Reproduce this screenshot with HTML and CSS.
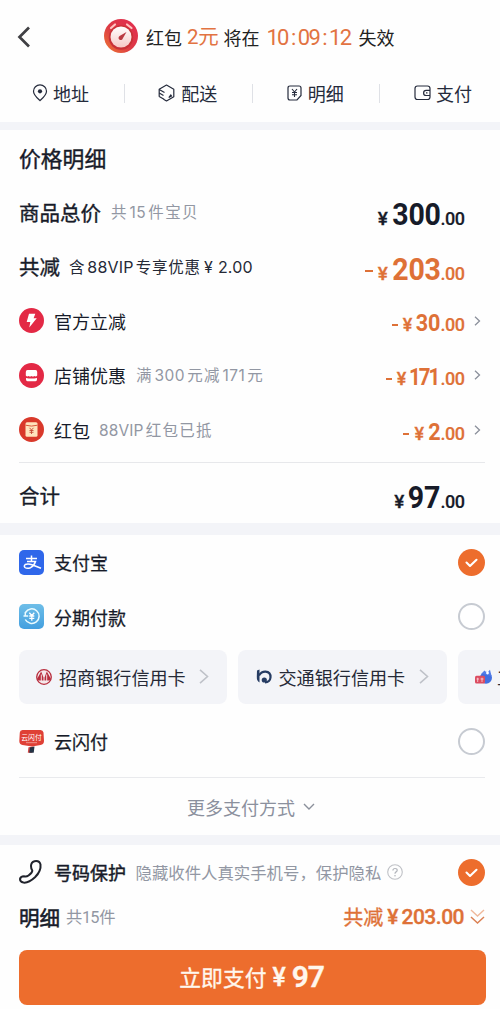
FILE: index.html
```html
<!DOCTYPE html>
<html lang="zh-CN">
<head>
<meta charset="utf-8">
<title>支付</title>
<link rel="stylesheet" href="styles.css">
</head>
<body>
<header class="top">
  <svg class="back" width="14" height="22" viewBox="0 0 14 22"><path d="M12 1.500L2.500 11L12 20.500" fill="none" stroke="#404044" stroke-width="2.700"/></svg>
  <svg class="clock" width="34" height="34" viewBox="0 0 34 34">
    <defs>
      <linearGradient id="ring" x1="1" y1="0" x2="0" y2="1"><stop offset="0" stop-color="#e32c50"/><stop offset=".55" stop-color="#dc3a45"/><stop offset="1" stop-color="#ef7b32"/></linearGradient>
      <linearGradient id="face" x1="0" y1="0" x2="0" y2="1"><stop offset="0" stop-color="#fff"/><stop offset="1" stop-color="#f6c9c6"/></linearGradient>
    </defs>
    <circle cx="17" cy="17" r="17" fill="url(#ring)"/>
    <circle cx="17" cy="18.500" r="12.200" fill="#c93137"/>
    <path d="M7 9L11 5.500M23 5.500L27.500 9" stroke="#ffc3c0" stroke-width="2.200" stroke-linecap="round"/>
    <circle cx="17" cy="18" r="10.500" fill="url(#face)"/>
    <path d="M22.500 13L18.900 19.300A2.200 2.200 0 1 1 16 16.800Z" fill="#b93a42"/>
  </svg>
  <p class="notice"><span>红包</span><b class="two">2元</b><span>将在</span><b class="timer"><i>10</i><i>:</i><i>09</i><i>:</i><i>12</i></b><span>失效</span></p>
</header>
<nav class="tabs">
  <a class="tab"><svg width="16" height="18" viewBox="0 0 16 18"><path d="M8 16.600C5.500 14.300 1.500 11 1.500 7.200A6.500 6.300 0 0 1 14.500 7.200C14.500 11 10.500 14.300 8 16.600Z" fill="none" stroke="#252b3c" stroke-width="1.200"/><circle cx="8" cy="7.300" r="2.100" fill="#252b3c"/></svg>地址</a>
  <a class="tab"><svg width="17" height="18" viewBox="0 0 17 18"><path d="M1.200 12.800V5.200L8.500 1L15.800 5.200V12.800L8.500 17L5.500 15.300" fill="none" stroke="#252b3c" stroke-width="1.200" stroke-linejoin="round"/><path d="M1.200 5.500L6.500 8.500M1.200 9L5.500 11.400M1.200 12.500L6 15.200M10.800 13.500L13.500 12L12.800 11Z" fill="none" stroke="#252b3c" stroke-width="1.200"/></svg>配送</a>
  <a class="tab"><svg width="15" height="16" viewBox="0 0 15 16"><path d="M3 1H12Q14 1 14 3V10.500L10 15H3Q1 15 1 13V3Q1 1 3 1Z" fill="none" stroke="#252b3c" stroke-width="1.200"/><path d="M5 4L7.500 7L10 4M7.500 7V12M5 7.500H10M5 9.700H10" fill="none" stroke="#252b3c" stroke-width="1.100"/></svg>明细</a>
  <a class="tab"><svg width="17" height="16" viewBox="0 0 17 16"><path d="M16 5.300V3.500Q16 1 13.500 1H3.500Q1 1 1 3.500V12Q1 14.500 3.500 14.500H13.500Q16 14.500 16 12V10.500M16 5.300H12.200A2.600 2.600 0 0 0 12.200 10.500H16ZM12 7.900H13.500" fill="none" stroke="#252b3c" stroke-width="1.200"/></svg>支付</a>
</nav>

<section class="band prices">
  <h2 class="title">价格明细</h2>
  <div class="row"><strong class="lead">商品总价</strong><span class="hint">共<em>15</em>件宝贝</span><span class="sum big"><i class="yen">¥</i><b>300</b><small>.00</small></span></div>
  <div class="row"><strong class="lead">共减</strong><span class="vip">含<em>88VIP</em>专享优惠<em class="vyen">¥</em><em class="vnum">2.00</em></span><span class="sum big orange"><i class="dash"></i><i class="yen">¥</i><b>203</b><small>.00</small></span></div>
  <div class="row item">
    <svg class="badge" width="25" height="25" viewBox="0 0 25 25"><circle cx="12.500" cy="12.500" r="12.500" fill="#e32945"/><path d="M10 5.800H16.300L14.600 10.200H17.700L10.300 19.500L11.300 14H7.700Z" fill="#fff"/></svg>
    <span class="name">官方立减</span><span class="sum orange"><i class="dash"></i><i class="yen">¥</i><b>30</b><small>.00</small></span><svg class="chev" width="7" height="10" viewBox="0 0 7 10"><path d="M1 .8L5.500 5L1 9.200" fill="none" stroke="#8b909b" stroke-width="1.300"/></svg></div>
  <div class="row item">
    <svg class="badge" width="25" height="25" viewBox="0 0 25 25"><circle cx="12.500" cy="12.500" r="12.500" fill="#e32945"/><path d="M8.500 7H16.500Q18.200 7 18.200 9V12.500Q17 14 15.300 13Q14 14 12.500 13Q11 14 9.700 13Q8 14 6.800 12.500V9Q6.800 7 8.500 7Z" fill="#fff"/><path d="M7 15Q12.500 16 18 15V16.500Q18 18.200 16.500 18.200H8.500Q7 18.200 7 16.500Z" fill="#fff"/></svg>
    <span class="name">店铺优惠</span><span class="hint">满<em>300</em>元减<em>171</em>元</span><span class="sum orange"><i class="dash"></i><i class="yen">¥</i><b class="tight">171</b><small>.00</small></span><svg class="chev" width="7" height="10" viewBox="0 0 7 10"><path d="M1 .8L5.500 5L1 9.200" fill="none" stroke="#8b909b" stroke-width="1.300"/></svg></div>
  <div class="row item">
    <svg class="badge" width="25" height="25" viewBox="0 0 25 25"><circle cx="12.500" cy="12.500" r="12.500" fill="#d9392b"/><rect x="6.500" y="5.200" width="12" height="14.600" rx="1.500" fill="#ffe3bd"/><path d="M6.500 8.200Q12.500 10 18.500 8.200" fill="none" stroke="#d9593c" stroke-width="1"/><path d="M10.500 10.800L12.500 13L14.500 10.800M12.500 13V17M10.500 13.500H14.500M10.500 15.300H14.500" fill="none" stroke="#c54a36" stroke-width=".9"/></svg>
    <span class="name">红包</span><span class="hint"><em class="first">88VIP</em>红包已抵</span><span class="sum orange"><i class="dash"></i><i class="yen">¥</i><b class="one">2</b><small>.00</small></span><svg class="chev" width="7" height="10" viewBox="0 0 7 10"><path d="M1 .8L5.500 5L1 9.200" fill="none" stroke="#8b909b" stroke-width="1.300"/></svg></div>
  <div class="row total"><strong class="lead">合计</strong><span class="sum big"><i class="yen">¥</i><b class="pair">97</b><small>.00</small></span></div>
</section>

<section class="band pay">
  <div class="row item">
    <svg class="badge" width="25" height="25" viewBox="0 0 25 25"><rect width="25" height="25" rx="5" fill="#2f67ea"/><path d="M7 8.500H18M12.500 5.500V11.500M8 11.500H16.500Q15 16 11.500 17.700Q8 19 6 17.500Q4.500 16 6.300 14.500Q9 13.200 13 14.800L22 18.300" fill="none" stroke="#fff" stroke-width="1.500"/></svg>
    <span class="name mid">支付宝</span><svg class="radio" width="27" height="27" viewBox="0 0 27 27"><circle cx="13.500" cy="13.500" r="13.500" fill="#ed6d2d"/><path d="M8.500 13.600L12 17L18.500 10.800" fill="none" stroke="#fff" stroke-width="2.100" stroke-linecap="round" stroke-linejoin="round"/></svg></div>
  <div class="row item">
    <svg class="badge" width="25" height="25" viewBox="0 0 25 25"><defs><linearGradient id="sky" x1="0" y1="0" x2="0" y2="1"><stop offset="0" stop-color="#6ebee8"/><stop offset="1" stop-color="#439fdf"/></linearGradient></defs><rect width="25" height="25" rx="5" fill="url(#sky)"/><path d="M6.300 15.500A7.300 7.300 0 1 0 6.500 8.500M4.500 12H9.200M6.300 8V12" fill="none" stroke="#e9fbff" stroke-width="1.500"/><path d="M10.300 8.800L12.800 11.500L15.300 8.800M12.800 11.500V16.800M10.300 12H15.300M10.300 14.300H15.300" fill="none" stroke="#fff" stroke-width="1.300"/></svg>
    <span class="name mid">分期付款</span><svg class="radio" width="27" height="27" viewBox="0 0 27 27"><circle cx="13.500" cy="13.500" r="12.500" fill="#fff" stroke="#c7cbd2" stroke-width="2"/></svg></div>
  <div class="cards">
    <div class="card"><svg width="16" height="16" viewBox="0 0 16 16"><circle cx="8" cy="8" r="7.300" fill="#f5e8ea" stroke="#b82e3e" stroke-width="1.300"/><path d="M1 10L5.200 2.500L7.500 8.500V11.500H1.800ZM8.500 8.500L10.800 2.500L15 10L14.200 11.500H8.500Z" fill="#b82e3e"/><path d="M5.300 5.500V12M10.700 5.500V12" stroke="#f8eef0" stroke-width=".9"/></svg><span>招商银行信用卡</span><svg class="go" width="10" height="15" viewBox="0 0 10 15"><path d="M1 .8L8.500 7.500L1 14.200" fill="none" stroke="#bfc2c9" stroke-width="1.600"/></svg></div>
    <div class="card"><svg width="16" height="15" viewBox="0 0 16 15"><path d="M1 1.500L3.500 .5V13.500Q.6 12 .8 7.500Z" fill="#263c63"/><path d="M3 6.500Q5.500 2.500 9.500 2.700Q14.800 3 14.500 8.500Q14 13.300 9 13.300" fill="none" stroke="#263c63" stroke-width="2.200"/><circle cx="8.300" cy="11" r="2.600" fill="#263c63"/></svg><span>交通银行信用卡</span><svg class="go" width="10" height="15" viewBox="0 0 10 15"><path d="M1 .8L8.500 7.500L1 14.200" fill="none" stroke="#bfc2c9" stroke-width="1.600"/></svg></div>
    <div class="card last"><svg width="17" height="16" viewBox="0 0 17 16"><circle cx="11" cy="8.800" r="6" fill="#426fe0"/><path d="M6.500 4.500L9.500 1.500L12 4L15 .8L16.500 7Z" fill="#527de8"/><circle cx="12.500" cy="4" r="1.400" fill="#fff"/><rect x="0" y="6.800" width="10" height="7.800" rx="1.500" fill="#db4c61"/><path d="M1.500 10H4M2.700 8.700V13M5.500 10H8.500M7 8.700V13" stroke="#fbd7dc" stroke-width=".8"/></svg><span>工</span></div>
  </div>
  <div class="row item union">
    <svg class="badge" width="25" height="25" viewBox="0 0 25 25"><path d="M3.500 1H21.500Q24 1 24.500 3.500L25 12Q25 15.500 21.500 16L13 17.500L3.500 16Q.3 15.500 .3 12L.8 3.500Q1 1 3.500 1Z" fill="#df4036"/><path d="M9.500 18.200L14.500 17.500L13 23.800H8.800Z" fill="#d04443"/><path d="M11 18.500L15.500 17.500L14.700 23.800H10.200Z" fill="#243344"/><text x="12.500" y="11.300" text-anchor="middle" class="mini">云闪付</text><path d="M7 13.700H18" stroke="#f3a9a3" stroke-width=".8"/></svg>
    <span class="name mid">云闪付</span><svg class="radio" width="27" height="27" viewBox="0 0 27 27"><circle cx="13.500" cy="13.500" r="12.500" fill="#fff" stroke="#c7cbd2" stroke-width="2"/></svg></div>
  <div class="more">更多支付方式<svg width="12" height="8" viewBox="0 0 12 8"><path d="M1 1L6 6L11 1" fill="none" stroke="#8b909b" stroke-width="1.400"/></svg></div>
</section>

<footer class="band foot">
  <div class="row item protect">
    <svg class="badge" width="25" height="25" viewBox="0 0 25 25"><path d="M15.500 1.200Q20.500 .2 21.500 4.500Q22.300 11 16 17.300Q9.500 23.300 4.500 22.600Q1 22 1 19Q1.500 16.300 5 16.300Q7.500 17 9.500 15.500Q13.500 12.500 13.300 10.500Q12 8.800 12 6Q12.100 2.200 15.500 1.200Z" fill="none" stroke="#20232c" stroke-width="2" stroke-linejoin="round"/></svg>
    <strong class="name bold">号码保护</strong><span class="privacy">隐藏收件人真实手机号，保护隐私</span><svg class="help" width="16" height="16" viewBox="0 0 16 16"><circle cx="8" cy="8" r="7.300" fill="none" stroke="#bfc1c6" stroke-width="1.100"/><path d="M5.900 6.500Q6 4.500 8 4.500Q10.200 4.500 10.200 6.300Q10.200 7.300 9.100 7.900Q8 8.500 8 9.800" fill="none" stroke="#b2b5bb" stroke-width="1.200"/><circle cx="8" cy="11.800" r=".8" fill="#b2b5bb"/></svg><svg class="radio" width="27" height="27" viewBox="0 0 27 27"><circle cx="13.500" cy="13.500" r="13.500" fill="#ed6d2d"/><path d="M8.500 13.600L12 17L18.500 10.800" fill="none" stroke="#fff" stroke-width="2.100" stroke-linecap="round" stroke-linejoin="round"/></svg></div>
  <div class="row detail"><strong class="lead heavy">明细</strong><span class="count">共<em>15</em>件</span><span class="saved">共减<i>¥</i><b>203.00</b></span><svg class="down" width="15" height="16" viewBox="0 0 15 16"><path d="M1 1L7.500 7L14 1" fill="none" stroke="#efb99c" stroke-width="1.400"/><path d="M1 8L7.500 14L14 8" fill="none" stroke="#db8154" stroke-width="1.500"/></svg></div>
  <button class="submit">立即支付<i>¥</i><b>97</b></button>
</footer>
</body>
</html>
```

FILE: styles.css
```css
* { box-sizing: border-box; }
body {
  margin: 0;
  width: 500px;
  height: 1009px;
  overflow: hidden;
  background: #fefefe;
  color: #171b29;
  font-family: "Noto Sans CJK SC", sans-serif;
  font-size: 18px;
  line-height: 1;
  white-space: nowrap;
}
h2, p { margin: 0; }
i, em { font-style: normal; }
svg { display: block; flex: none; overflow: visible; }

.top { height: 74px; display: flex; align-items: center; padding-left: 17px; }
.clock { margin-left: 73px; margin-top: -2px; }
.notice { display: flex; align-items: center; margin-left: 8px; height: 30px; color: #222; }
.notice b { font-weight: 400; color: #e27342; }
.two { font-size: 20.500px; margin: 0 5px; letter-spacing: -.3px; font-family: Roboto, "Noto Sans CJK SC", sans-serif; }
.timer { font: 22px/1 Roboto, sans-serif; display: flex; width: 84px; justify-content: space-between; margin: 1px 8px 0 7px; }
.notice .timer i { letter-spacing: -1.700px; }

.tabs { display: flex; height: 48px; padding-bottom: 10px; }
.tab { flex: none; width: 127.500px; display: flex; align-items: center; gap: 6px; justify-content: center; color: #252b3c; background: linear-gradient(#dfe1e6, #dfe1e6) left center / 1px 19px no-repeat; }
.tab:first-child { width: 124px; gap: 5px; padding-right: 3px; background: none; }
.tab:last-child { width: 121px; gap: 5px; justify-content: flex-end; padding-right: 28px; }

.band { border-top: 8px solid #f3f4f8; padding: 0 15px 0 19px; }
.prices { height: 401px; }
.title { font-size: 21.800px; font-weight: 400; line-height: 55px; height: 55px; -webkit-text-stroke: .4px; }
.row { display: flex; align-items: center; height: 54.400px; }
.lead { font-size: 20.500px; font-weight: 400; -webkit-text-stroke: .35px; }
.hint { font-size: 15.500px; letter-spacing: 1.300px; color: #9297a3; margin-left: 10px; }
.hint em, .vip em { font-family: Inter, sans-serif; }
.hint em { letter-spacing: .4px; margin: 0 2.200px 0 1.800px; }
.hint .first { letter-spacing: .1px; margin-left: -1px; }
.vip { font-size: 15.500px; letter-spacing: .8px; margin-left: 9px; display: flex; align-items: center; color: #252936; }
.vip em { font-size: 16px; letter-spacing: .2px; margin: 0 2px; }
.vip .vyen { margin: 0 5px 0 3px; }
.vip .vnum { margin: 0; }
.badge { margin-right: 10px; }
.name { font-size: 18px; }
.mid { font-weight: 400; -webkit-text-stroke: .25px; }
.bold { font-weight: 400; -webkit-text-stroke: .45px; }
.sum { margin-left: auto; margin-right: 21px; margin-top: 4px; display: flex; align-items: baseline; font-family: Roboto, sans-serif; font-weight: 700; }
.sum .yen { font-size: 18px; margin-right: 4px; font-weight: 500; -webkit-text-stroke: .3px; }
.sum b { font-size: 24px; letter-spacing: -.2px; margin-left: -3px; font-weight: 700; transform: scaleX(.9); transform-origin: right; }
.sum small { font-size: 18px; font-weight: 500; letter-spacing: -.5px; margin-right: -.5px; -webkit-text-stroke: .2px; }
.sum .tight { letter-spacing: -2.400px; margin-left: -6px; margin-right: 2px; transform: scaleX(.85); }
.sum .one { margin-left: -1px; }
.big { margin-top: 5px; }
.big b { font-size: 31px; letter-spacing: -.2px; margin-left: -4px; transform: scaleX(.92); }
.big .pair { margin-left: -3px; }
.big .yen { margin-right: 4px; font-size: 19px; }
.orange { color: #de7137; }
.dash { width: 6px; height: 2px; background: currentColor; align-self: center; margin: 4px 5px 0 0; }
.big .dash { width: 8px; height: 2.500px; }
.item .sum { margin-right: 10px; }
.item .chev { margin-right: 4px; }
.total { height: 65px; margin-top: 5px; border-top: 1px solid #e7e8eb; }

.pay { border-top-width: 12px; height: 312px; }
.radio { margin-left: auto; }
.cards { display: flex; gap: 11px; margin: 6px -15px 0 -.5px; overflow: hidden; }
.card { flex: none; width: 208.500px; height: 54px; padding: 0 18px 0 17.500px; border-radius: 8px; background: #f3f4f8; display: flex; align-items: center; color: #252936; }
.card span { margin-left: 7px; font-size: 18.100px; }
.last span { margin-left: 5px; }
.go { margin-left: auto; }
.union { height: 75px; }
.mini { font: 6.800px "Noto Sans CJK SC", sans-serif; fill: #fff; }
.more { border-top: 1px solid #e9eaed; height: 58px; display: flex; align-items: center; justify-content: center; gap: 8px; margin-top: -1.500px; padding: 0 2px 0 0; color: #8b909d; }

.foot { border-top-width: 10px; }
.privacy { font-size: 16.400px; color: #9297a3; margin-left: 9.500px; }
.help { margin-left: 6px; }
.protect { height: 54px; }
.detail { height: 36px; }
.heavy { -webkit-text-stroke: .55px; }
.count { font-size: 16.300px; letter-spacing: -.3px; color: #9297a3; margin-left: 6px; }
.count em { font-family: Roboto, sans-serif; letter-spacing: -1px; margin-right: 1px; }
.saved { margin-left: auto; color: #de7137; font-size: 20px; -webkit-text-stroke: .35px; display: flex; align-items: center; }
.saved i, .saved b { font-family: Roboto, sans-serif; font-weight: 500; }
.saved b { font-size: 21px; letter-spacing: -.5px; margin-left: 3px; }
.saved i { margin-left: 4px; font-size: 21px; }
.down { margin-left: 6px; }
.submit { display: flex; align-items: center; justify-content: center; width: 467px; height: 54.500px; margin-top: 15px; margin-left: -.5px; padding-right: 7px; border: 0; border-radius: 8px; background: #ed6d2d; color: #fff7ed; font: 400 21.800px/1 "Noto Sans CJK SC", sans-serif; -webkit-text-stroke: .35px; }
.submit i, .submit b { font-family: Roboto, sans-serif; font-weight: 500; }
.submit i { font-size: 25px; margin: 0 6px; }
.submit b { font-size: 30px; letter-spacing: -1.200px; font-weight: 600; }
```
